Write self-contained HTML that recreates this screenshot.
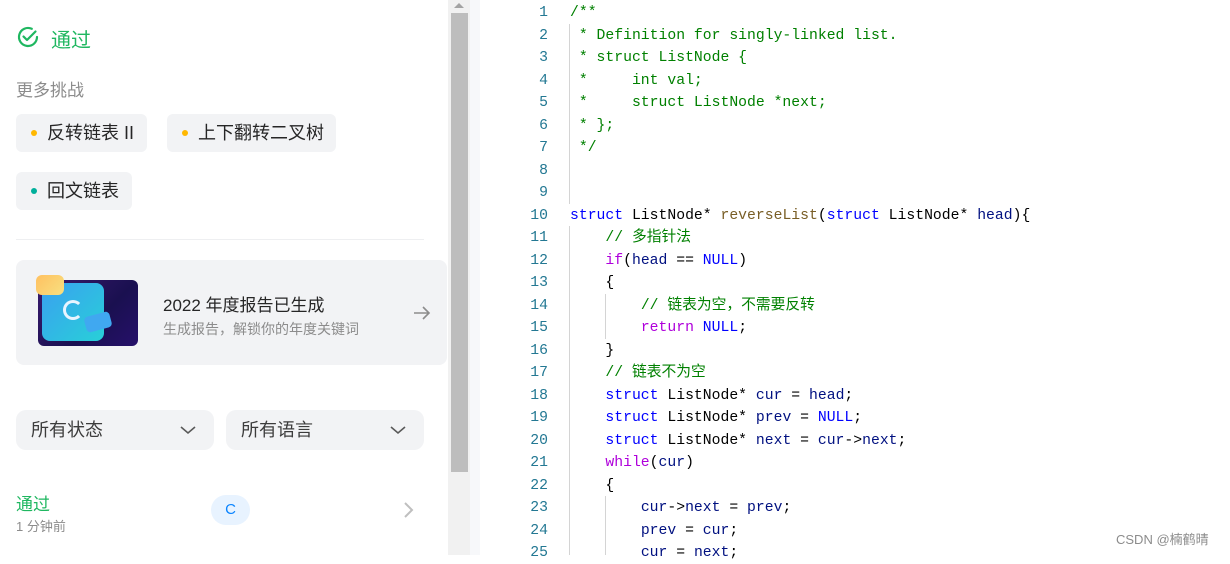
<!DOCTYPE html>
<html><head><meta charset="utf-8"><style>
*{margin:0;padding:0;box-sizing:border-box}
body{width:1230px;height:555px;overflow:hidden;background:#fff;font-family:"Liberation Sans","Noto Sans CJK SC",sans-serif;position:relative}
.a{position:absolute}
.tag{position:absolute;height:38px;background:#f2f3f5;border-radius:6px;font-size:18px;color:#262626;line-height:38px;padding-left:31px}
.tag i{position:absolute;left:15px;top:16px;width:6px;height:6px;border-radius:3px}
.sel{position:absolute;top:410px;height:40px;background:#f2f3f5;border-radius:10px;font-size:18px;color:#3c3c3c;line-height:40px;padding-left:15px;width:198px}
.code{position:absolute;left:480px;top:0;right:0;font-family:"Liberation Mono","Noto Sans CJK SC",monospace;font-size:14.75px}
.ln{position:absolute;width:68px;text-align:right;color:#237893;left:0;line-height:22px;height:22px}
.cl{position:absolute;left:90px;white-space:pre;color:#000;line-height:22px;height:22px}
.c{color:#008000}.k{color:#0000ff}.f{color:#795e26}.p{color:#af00db}.v{color:#001080}
.g{position:absolute;width:1px;background:#d4d4d4}
</style></head><body>
<svg class="a" style="left:16px;top:25px" width="24" height="24" viewBox="0 0 24 24"><path d="M21 12A9 9 0 1 1 15.8 3.8" fill="none" stroke="#1fb760" stroke-width="2.2" stroke-linecap="round"/><path d="M7.5 11.5l3.5 3.5 8.5-8.5" fill="none" stroke="#1fb760" stroke-width="2.2" stroke-linecap="round" stroke-linejoin="round"/></svg>
<div class="a" style="left:51px;top:24px;font-size:20px;color:#1fb760">通过</div>
<div class="a" style="left:16px;top:76px;font-size:17px;color:#8c8c8c">更多挑战</div>
<div class="tag" style="left:16px;top:114px;width:131px"><i style="background:#ffb800"></i>反转链表 II</div>
<div class="tag" style="left:167px;top:114px;width:169px"><i style="background:#ffb800"></i>上下翻转二叉树</div>
<div class="tag" style="left:16px;top:172px;width:116px"><i style="background:#00af9b"></i>回文链表</div>
<div class="a" style="left:16px;top:239px;width:408px;height:1px;background:#eeeff1"></div>
<div class="a" style="left:16px;top:260px;width:431px;height:105px;background:#f2f3f5;border-radius:8px"></div>
<div class="a" style="left:38px;top:280px;width:100px;height:66px;border-radius:6px;background:linear-gradient(135deg,#3a1a6e,#1a1050 60%,#26106a)"></div>
<div class="a" style="left:42px;top:283px;width:62px;height:58px;border-radius:8px;background:linear-gradient(135deg,#3aa0f0,#28d0d8)"></div>
<div class="a" style="left:36px;top:275px;width:28px;height:20px;border-radius:6px;background:linear-gradient(135deg,#ffc060,#f8e080)"></div>
<div class="a" style="left:63px;top:300px;width:20px;height:20px;border:3px solid #e8f4ff;border-radius:50%;border-right-color:transparent"></div>
<div class="a" style="left:85px;top:314px;width:26px;height:16px;border-radius:4px;background:#40a8f0;transform:rotate(-15deg)"></div>
<div class="a" style="left:163px;top:291px;font-size:17px;color:#262626">2022 年度报告已生成</div>
<div class="a" style="left:163px;top:319px;font-size:14px;color:#8c8c8c">生成报告，解锁你的年度关键词</div>
<svg class="a" style="left:413px;top:304px" width="18" height="18" viewBox="0 0 18 18"><path d="M1 9h15M10 3l6 6-6 6" fill="none" stroke="#8c8c8c" stroke-width="1.6"/></svg>
<div class="sel" style="left:16px">所有状态</div>
<div class="sel" style="left:226px">所有语言</div>
<svg class="a" style="left:180px;top:424px" width="16" height="12"><path d="M1 3l7 6 7-6" fill="none" stroke="#595959" stroke-width="1.6"/></svg>
<svg class="a" style="left:390px;top:424px" width="16" height="12"><path d="M1 3l7 6 7-6" fill="none" stroke="#595959" stroke-width="1.6"/></svg>
<div class="a" style="left:16px;top:490px;font-size:17px;color:#1fb760">通过</div>
<div class="a" style="left:16px;top:516px;font-size:13px;color:#8c8c8c">1 分钟前</div>
<div class="a" style="left:211px;top:495px;width:39px;height:30px;border-radius:15px;background:#e8f3ff;color:#0a84ff;font-size:15px;text-align:center;line-height:30px">C</div>
<svg class="a" style="left:403px;top:501px" width="12" height="18"><path d="M2 2l7 7-7 7" fill="none" stroke="#bfbfbf" stroke-width="2"/></svg>
<div class="a" style="left:448px;top:0;width:22px;height:555px;background:#f1f1f1"></div>
<div class="a" style="left:451px;top:13px;width:17px;height:459px;background:#bdbdbd"></div>
<div class="a" style="left:454px;top:3px;width:0;height:0;border-left:5px solid transparent;border-right:5px solid transparent;border-bottom:5px solid #a3a3a3"></div>
<div class="a" style="left:470px;top:0;width:10px;height:555px;background:#f7f8fa"></div>
<div class="code">
<div class="g" style="left:89px;top:24px;height:180px"></div>
<div class="g" style="left:89px;top:226px;height:329px"></div>
<div class="g" style="left:125px;top:294px;height:45px"></div>
<div class="g" style="left:125px;top:496px;height:59px"></div>
<div id="lines"></div>
</div>
<div class="a" style="left:1116px;top:529px;font-size:13px;color:#8c8c8c">CSDN @楠鹤晴</div>
<script>
var L=[
'<span class="c">/**</span>',
'<span class="c"> * Definition for singly-linked list.</span>',
'<span class="c"> * struct ListNode {</span>',
'<span class="c"> *     int val;</span>',
'<span class="c"> *     struct ListNode *next;</span>',
'<span class="c"> * };</span>',
'<span class="c"> */</span>',
'','',
'<span class="k">struct</span> ListNode* <span class="f">reverseList</span>(<span class="k">struct</span> ListNode* <span class="v">head</span>){',
'    <span class="c">// 多指针法</span>',
'    <span class="p">if</span>(<span class="v">head</span> == <span class="k">NULL</span>)',
'    {',
'        <span class="c">// 链表为空，不需要反转</span>',
'        <span class="p">return</span> <span class="k">NULL</span>;',
'    }',
'    <span class="c">// 链表不为空</span>',
'    <span class="k">struct</span> ListNode* <span class="v">cur</span> = <span class="v">head</span>;',
'    <span class="k">struct</span> ListNode* <span class="v">prev</span> = <span class="k">NULL</span>;',
'    <span class="k">struct</span> ListNode* <span class="v">next</span> = <span class="v">cur</span>-><span class="v">next</span>;',
'    <span class="p">while</span>(<span class="v">cur</span>)',
'    {',
'        <span class="v">cur</span>-><span class="v">next</span> = <span class="v">prev</span>;',
'        <span class="v">prev</span> = <span class="v">cur</span>;',
'        <span class="v">cur</span> = <span class="v">next</span>;'];
var h='';for(var i=0;i<L.length;i++){var t=2+22.5*i;h+='<div class="ln" style="top:'+t+'px">'+(i+1)+'</div><div class="cl" style="top:'+t+'px">'+L[i]+'</div>';}
document.getElementById('lines').innerHTML=h;
</script>
</body></html>
